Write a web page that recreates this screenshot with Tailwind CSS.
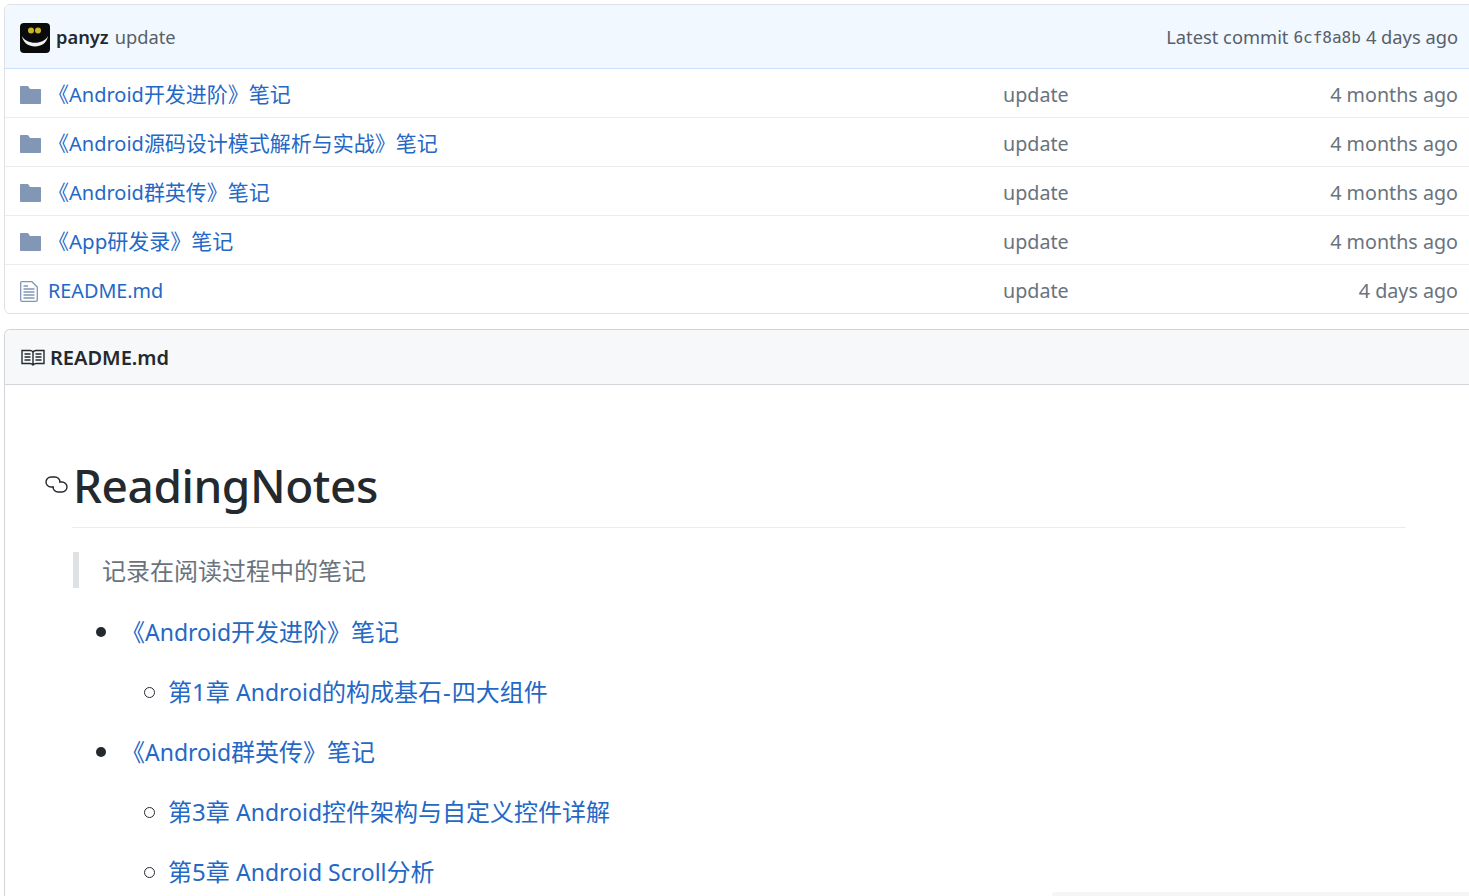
<!DOCTYPE html>
<html>
<head>
  <meta charset="UTF-8" />
  <script src="https://cdn.jsdelivr.net/npm/@tailwindcss/browser@4"></script>
  <title>ReadingNotes</title>
</head>
<body class="bg-white h-[896px] w-[1469px] overflow-hidden relative font-['Noto_Sans','Noto_Sans_CJK_SC',sans-serif] text-[21px] text-[#24292e]">
  <div class="ml-1 mt-1 w-[1480px]">
    <!-- file list -->
    <div class="border border-[#dfe2e5] rounded-md">
      <div class="h-[64px] flex items-center justify-between pl-[15px] pr-[25px] bg-[#f1f8ff] border-b border-[#c8e1ff] rounded-t-md text-[18.3px] text-[#586069]">
        <div class="flex items-center">
          <svg class="w-[30px] h-[30px] translate-y-[1px] mr-1.5" viewBox="0 0 30 30"><rect width="30" height="30" rx="4" fill="#0a0a0a"/><ellipse cx="11" cy="7.500" rx="3" ry="3" fill="#c9b52a"/><ellipse cx="18" cy="7.500" rx="3" ry="3" fill="#c9b52a"/><path d="M2 13C6 22 24 22 28 13C26 27 4 27 2 13Z" fill="#f2f2f2"/></svg>
          <span class="font-semibold text-[#24292e] mr-1.5">panyz</span><span>update</span>
        </div>
        <div class="flex items-center gap-[5px]"><span>Latest commit</span><span class="translate-y-[1px] font-['DejaVu_Sans_Mono',monospace] text-[16px]">6cf8a8b</span><span>4 days ago</span></div>
      </div>
      <div class="flex items-center h-[49px] border-b border-[#eaecef] pt-[3px] pl-[15px] pr-[25px]">
        <svg class="w-[21px] h-[18px] shrink-0" viewBox="0 0 21 18"><path d="M1 0H8L10 3H20C20.6 3 21 3.4 21 4V17C21 17.6 20.6 18 20 18H1C.4 18 0 17.6 0 17V1C0 .4 .4 0 1 0Z" fill="#8197b5"/></svg>
        <a class="ml-[7px] w-[955px] pt-[1px] text-[#2468c5]">《<span class="text-[20px]">Android</span>开发进阶》笔记</a>
        <span class="pt-[1px] text-[19.7px] text-[#6a737d]">update</span><span class="ml-auto pt-[1px] text-[19.7px] text-[#6a737d]">4 months ago</span>
      </div>
      <div class="flex items-center h-[49px] border-b border-[#eaecef] pt-[3px] pl-[15px] pr-[25px]">
        <svg class="w-[21px] h-[18px] shrink-0" viewBox="0 0 21 18"><path d="M1 0H8L10 3H20C20.6 3 21 3.4 21 4V17C21 17.6 20.6 18 20 18H1C.4 18 0 17.6 0 17V1C0 .4 .4 0 1 0Z" fill="#8197b5"/></svg>
        <a class="ml-[7px] w-[955px] pt-[1px] text-[#2468c5]">《<span class="text-[20px]">Android</span>源码设计模式解析与实战》笔记</a>
        <span class="pt-[1px] text-[19.7px] text-[#6a737d]">update</span><span class="ml-auto pt-[1px] text-[19.7px] text-[#6a737d]">4 months ago</span>
      </div>
      <div class="flex items-center h-[49px] border-b border-[#eaecef] pt-[3px] pl-[15px] pr-[25px]">
        <svg class="w-[21px] h-[18px] shrink-0" viewBox="0 0 21 18"><path d="M1 0H8L10 3H20C20.6 3 21 3.4 21 4V17C21 17.6 20.6 18 20 18H1C.4 18 0 17.6 0 17V1C0 .4 .4 0 1 0Z" fill="#8197b5"/></svg>
        <a class="ml-[7px] w-[955px] pt-[1px] text-[#2468c5]">《<span class="text-[20px]">Android</span>群英传》笔记</a>
        <span class="pt-[1px] text-[19.7px] text-[#6a737d]">update</span><span class="ml-auto pt-[1px] text-[19.7px] text-[#6a737d]">4 months ago</span>
      </div>
      <div class="flex items-center h-[49px] border-b border-[#eaecef] pt-[3px] pl-[15px] pr-[25px]">
        <svg class="w-[21px] h-[18px] shrink-0" viewBox="0 0 21 18"><path d="M1 0H8L10 3H20C20.6 3 21 3.4 21 4V17C21 17.6 20.6 18 20 18H1C.4 18 0 17.6 0 17V1C0 .4 .4 0 1 0Z" fill="#8197b5"/></svg>
        <a class="ml-[7px] w-[955px] pt-[1px] text-[#2468c5]">《<span class="text-[20.5px]">App</span>研发录》笔记</a>
        <span class="pt-[1px] text-[19.7px] text-[#6a737d]">update</span><span class="ml-auto pt-[1px] text-[19.7px] text-[#6a737d]">4 months ago</span>
      </div>
      <div class="flex items-center h-[48px] pt-[4px] pl-[15px] pr-[25px]">
        <svg class="w-[18px] h-[21px] shrink-0" viewBox="0 0 18 21" fill="none" stroke="#8197b5" stroke-width="1.3"><path d="M1.7.7H12L17.3 6V19C17.3 19.7 16.8 20.3 16 20.3H1.7C1.2 20.3.7 19.8.7 19V1.7C.7 1.2 1.2.7 1.7.7Z"/><path d="M3.5 8H14.5M3.5 11H14.5M3.5 14H14.5M3.5 17H14.5M3.5 5H8"/></svg>
        <a class="ml-[10px] w-[955px] text-[19.8px] text-[#2468c5]">README.md</a>
        <span class="text-[19.7px] text-[#6a737d]">update</span><span class="ml-auto text-[19.7px] text-[#6a737d]">4 days ago</span>
      </div>
    </div>

    <!-- readme -->
    <div class="mt-[15px] border border-b-0 border-[#d1d5da] rounded-t-md h-[567px] overflow-hidden">
      <div class="h-[55px] flex items-center pl-[16px] pt-[2px] bg-[#f6f8fa] border-b border-[#d1d5da] rounded-t-md text-[20px] font-semibold">
        <svg class="w-[24px] h-[17px] -mt-[2px] mr-[5px]" viewBox="0 0 24 17" fill="none" stroke="#24292e" stroke-width="1.400"><path d="M1 1.500H9C10.500 1.500 12 2.500 12 3.500C12 2.500 13.500 1.500 15 1.500H23V14.500H15C13.500 14.500 12.500 15.500 12 16C11.500 15.500 10.500 14.500 9 14.500H1ZM12 3.500V16"/><path d="M3.500 5H9.500M3.500 8H9.500M3.500 11H9.500M14.500 5H20.500M14.500 8H20.500M14.500 11H20.500" stroke-width="1.300"/></svg>
        README.md
      </div>
      <div class="relative pt-[68px] pl-[67px] w-[1401px]">
        <svg class="absolute left-[40px] top-[91px] w-[23px] h-[17px]" viewBox="0 0 23 17" fill="none" stroke="#24292e" stroke-width="1.400"><path d="M9 11H6A5 5 0 0 1 6 1H10A5 5 0 0 1 15 6"/><path d="M14 6H17A5 5 0 0 1 17 16H13A5 5 0 0 1 8 11"/></svg>
        <h1 class="h-[75px] pl-[1px] border-b border-[#eaecef] text-[46px] leading-[64px] font-medium text-[#24292e] tracking-[-0.45px]">ReadingNotes</h1>
        <blockquote class="mt-[24px] ml-[1px] h-[36px] border-l-[6px] border-[#dfe2e5] pl-[23px] text-[24px] leading-[38px] text-[#6a737d]">记录在阅读过程中的笔记</blockquote>
        <ul class="mt-[14px] text-[24px] leading-[56px] text-[#2468c5]">
          <li class="flex items-center h-[60px]"><span class="ml-[24px] w-[10px] h-[10px] rounded-full bg-[#24292e]"></span><a class="ml-[15px]">《<span class="text-[23px]">Android</span>开发进阶》笔记</a></li>
          <li class="flex items-center h-[60px]"><span class="ml-[72px] w-[11px] h-[11px] rounded-full border border-[#24292e]"></span><a class="ml-[13px]">第1章 <span class="text-[23px]">Android</span>的构成基石<span class="mx-[1px]">-</span>四大组件</a></li>
          <li class="flex items-center h-[60px]"><span class="ml-[24px] w-[10px] h-[10px] rounded-full bg-[#24292e]"></span><a class="ml-[15px]">《<span class="text-[23px]">Android</span>群英传》笔记</a></li>
          <li class="flex items-center h-[60px]"><span class="ml-[72px] w-[11px] h-[11px] rounded-full border border-[#24292e]"></span><a class="ml-[13px]">第3章 <span class="text-[23px]">Android</span>控件架构与自定义控件详解</a></li>
          <li class="flex items-center h-[60px]"><span class="ml-[72px] w-[11px] h-[11px] rounded-full border border-[#24292e]"></span><a class="ml-[13px]">第5章 <span class="text-[23px]">Android Scroll</span>分析</a></li>
        </ul>
      </div>
    </div>
  </div>
  <div class="absolute left-[1052px] top-[892px] w-[417px] h-[4px] bg-[#f6f6f6] rounded-tl-md"></div>
</body>
</html>
